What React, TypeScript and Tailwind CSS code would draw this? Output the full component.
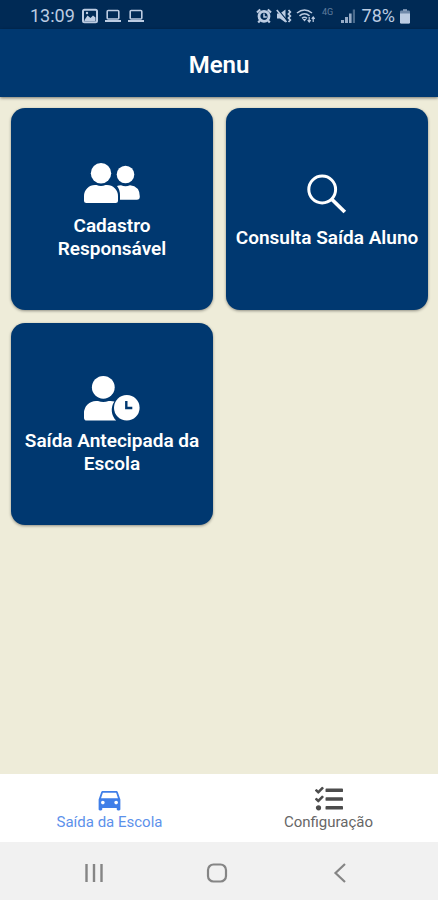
import { useState } from "react";
import type { ReactNode } from "react";
import { FaTasks } from "react-icons/fa";
import { MdDirectionsCar } from "react-icons/md";

type Tab = "saida" | "config";

function UsersIcon() {
  return (
    <svg className="size-14" viewBox="0 0 56 56" fill="currentColor" aria-hidden="true">
      <circle cx="17" cy="15.200" r="10.200" />
      <path d="M11 27h1.500q4.500 2 9 0H23a11 11 0 0 1 11 11v4.500a2.500 2.500 0 0 1-2.500 2.500h-29A2.500 2.500 0 0 1 0 42.500V38a11 11 0 0 1 11-11Z" />
      <circle cx="41.500" cy="16.500" r="8.800" />
      <path d="M33 28q1.800-.8 4-.8 4.500 2.200 9 0 9.800 1 9.800 11.300 0 3.300-3 3.300H36v-4.300q0-6-3-9.500Z" />
    </svg>
  );
}

function SearchIcon() {
  return (
    <svg
      className="size-14"
      viewBox="0 0 56 56"
      fill="none"
      stroke="currentColor"
      aria-hidden="true"
    >
      <circle cx="23.200" cy="19.500" r="13.400" strokeWidth="3" />
      <path d="m33 29.500 12.800 12.500" strokeWidth="3.800" />
    </svg>
  );
}

function UserClockIcon() {
  return (
    <svg className="size-14" viewBox="0 0 56 56" fill="currentColor" aria-hidden="true">
      <circle cx="19.300" cy="14.300" r="11.400" />
      <path d="M12 28h2q5.300 2.200 10.600 0h2q2 0 3.800.6a14.700 14.700 0 0 0 1.800 18.900H2.800A2.800 2.800 0 0 1 0 44.700V40a12 12 0 0 1 12-12Z" />
      <circle cx="42.800" cy="34.800" r="12.800" />
      <path d="M42.300 28v7h6" fill="none" stroke="#003870" strokeWidth="2.400" />
    </svg>
  );
}

function PictureIcon() {
  return (
    <svg className="h-4 w-4" viewBox="0 0 16 16" aria-hidden="true">
      <rect x="1" y="1.800" width="14" height="12.400" rx="1.500" fill="none" stroke="currentColor" strokeWidth="2" />
      <path d="m2.500 12 3-4.500L8.500 10 11 7.500l2.500 2V13h-11Z" fill="currentColor" />
      <circle cx="5" cy="5" r="1.200" fill="currentColor" />
    </svg>
  );
}

function LaptopIcon() {
  return (
    <svg className="size-4" viewBox="0 0 16 16" fill="none" stroke="currentColor" aria-hidden="true">
      <rect x="2.200" y="2.500" width="11.600" height="8.500" rx="1" strokeWidth="1.600" />
      <path d="M0 13h16" strokeWidth="2" />
    </svg>
  );
}

function AlarmIcon() {
  return (
    <svg className="size-4" viewBox="0 0 16 16" fill="none" stroke="currentColor" aria-hidden="true">
      <circle cx="8" cy="8.300" r="5" strokeWidth="2.800" />
      <path d="M8 5.500V9h2.800" strokeWidth="1.500" />
      <path d="M1 4.500 4.200 1.500M15 4.500 11.800 1.500M4 12.500l-1.800 2M12 12.500l1.800 2" strokeWidth="2.200" />
    </svg>
  );
}

function MuteIcon() {
  return (
    <svg className="size-4" viewBox="0 0 16 16" aria-hidden="true">
      <path d="M1 5.500h3L9.500 1.500v13L4 10.500H1Z" fill="currentColor" />
      <path d="M1.800 1.500 11.500 13" stroke="#002a55" strokeWidth="1.200" />
      <path d="M.8 2 10.500 14" stroke="currentColor" strokeWidth="1.600" />
      <path d="m12.500 2 1.800 2-1.800 2 1.800 2-1.800 2 1.800 2-1.800 2" fill="none" stroke="currentColor" strokeWidth="1.800" />
    </svg>
  );
}

function WifiIcon() {
  return (
    <svg className="h-4 w-5" viewBox="0 0 20 16" fill="none" stroke="currentColor" aria-hidden="true">
      <path d="M1 5q7.500-6 15 0M3.500 7.800q5-4 10 0M6 10.300q2.500-2 5 0" strokeWidth="1.600" />
      <path d="m6.500 11 2 2.500 2-2.500Z" fill="currentColor" stroke="none" />
      <path d="M13.200 9v5m-1.500-1.800 1.500 1.800 1.500-1.800M17.200 14V9m-1.500 1.800L17.200 9l1.500 1.800" strokeWidth="1.200" />
    </svg>
  );
}

function SignalIcon() {
  return (
    <svg className="size-4" viewBox="0 0 16 16" fill="currentColor" aria-hidden="true">
      <path d="M1 12h3v3H1ZM5 9h3v6H5ZM9 5.500h2.600V15H9Z" opacity=".8" />
      <path d="M12.800 1.500H15V15h-2.200Z" opacity=".4" />
    </svg>
  );
}

function BatteryIcon() {
  return (
    <svg className="h-4 w-3" viewBox="0 0 12 16" aria-hidden="true">
      <path d="M4 1h4v2H4Z" fill="currentColor" opacity=".6" />
      <rect x="1" y="2.500" width="10" height="13" rx="1.200" fill="currentColor" opacity=".6" />
      <path d="M1 5.500h10v8.800q0 1.200-1.200 1.200H2.200Q1 15.500 1 14.300Z" fill="currentColor" />
    </svg>
  );
}

function StatusBar() {
  return (
    <div className="flex h-[29px] items-center justify-between bg-[#002a55] pt-0.5 pr-[27px] pl-[30px] text-[#bccce2]">
      <div className="flex items-center gap-[7px]">
        <span className="text-lg leading-6">13:09</span>
        <PictureIcon />
        <LaptopIcon />
        <LaptopIcon />
      </div>
      <div className="flex items-center gap-1">
        <AlarmIcon />
        <MuteIcon />
        <WifiIcon />
        <span className="w-4 pb-2 text-center text-[9px] leading-3 opacity-50">4G</span>
        <SignalIcon />
        <span className="pl-0.5 text-lg leading-6">78%</span>
        <BatteryIcon />
      </div>
    </div>
  );
}

function MenuCard({ icon, label }: { icon: ReactNode; label: string }) {
  return (
    <button
      type="button"
      className="flex aspect-square w-full cursor-pointer flex-col items-center justify-center rounded-[14px] bg-[#003870] px-1.5 text-white shadow-[0_1px_3px_rgba(0,0,0,0.4)]"
    >
      {icon}
      <span className="text-[19px] leading-[23px] font-semibold">{label}</span>
    </button>
  );
}

function TabButton({
  icon,
  label,
  active,
  onClick,
}: {
  icon: ReactNode;
  label: string;
  active: boolean;
  onClick: () => void;
}) {
  return (
    <button
      type="button"
      onClick={onClick}
      className={`flex flex-1 cursor-pointer flex-col items-center justify-center ${
        active ? "text-[#3f7ee8]" : "text-[#4c4c4c]"
      }`}
    >
      <span className="flex h-7 items-center">{icon}</span>
      <span className="text-[15px] leading-[18px] opacity-85">{label}</span>
    </button>
  );
}

export default function App() {
  const [tab, setTab] = useState<Tab>("saida");

  return (
    <div className="flex min-h-screen flex-col bg-[#eeecd9] font-['Roboto',sans-serif]">
      <StatusBar />
      <header className="z-10 flex h-[68px] items-center justify-center bg-[#003870] pt-1 shadow-[0_1px_3px_rgba(0,0,0,0.5)]">
        <h1 className="text-2xl font-semibold text-white">Menu</h1>
      </header>
      <main className="grid flex-1 grid-cols-2 content-start gap-x-[13px] gap-y-[13px] pt-[11px] pr-[10px] pl-[11px]">
        <MenuCard icon={<UsersIcon />} label="Cadastro Responsável" />
        <MenuCard icon={<SearchIcon />} label="Consulta Saída Aluno" />
        <MenuCard icon={<UserClockIcon />} label="Saída Antecipada da Escola" />
      </main>
      <nav className="flex h-[68px] bg-white">
        <TabButton
          icon={<MdDirectionsCar className="size-[29px]" />}
          label="Saída da Escola"
          active={tab === "saida"}
          onClick={() => setTab("saida")}
        />
        <TabButton
          icon={<FaTasks className="size-7" />}
          label="Configuração"
          active={tab === "config"}
          onClick={() => setTab("config")}
        />
      </nav>
      <div className="flex h-[58px] items-center justify-around bg-[#f1f1f1] pt-1 pr-9 pl-8 text-[#858585]">
        <button type="button" aria-label="Recentes">
          <svg className="size-6" viewBox="0 0 24 24" stroke="currentColor" strokeWidth="2.400">
            <path d="M4.500 3v18M12 3v18M19.500 3v18" />
          </svg>
        </button>
        <button type="button" aria-label="Início">
          <svg className="size-6" viewBox="0 0 24 24" fill="none" stroke="currentColor" strokeWidth="2.200">
            <rect x="3" y="3.500" width="18" height="17" rx="5.500" />
          </svg>
        </button>
        <button type="button" aria-label="Voltar">
          <svg className="size-6" viewBox="0 0 24 24" fill="none" stroke="currentColor" strokeWidth="2.200">
            <path d="m17 3-9.500 9 9.500 9" />
          </svg>
        </button>
      </div>
    </div>
  );
}
